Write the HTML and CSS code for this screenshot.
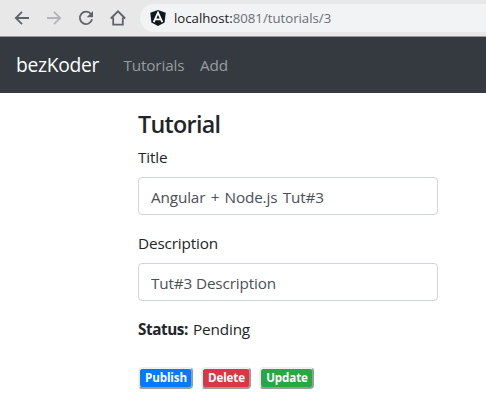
FILE: index.html
```html
<!DOCTYPE html>
<html lang="en">
<head>
<meta charset="utf-8">
<title>Tutorial</title>
<link rel="stylesheet" href="styles.css">
</head>
<body>
<header class="toolbar">
  <svg class="icon" viewBox="0 0 16 16"><path d="M15 8H2M8 1.8 1.8 8 8 14.2"/></svg>
  <svg class="icon muted" viewBox="0 0 16 16"><path d="M1 8h13M8 1.8 14.2 8 8 14.2"/></svg>
  <svg class="icon" viewBox="0 0 16 16"><path d="M13.1 4.2A6.2 6.2 0 1 0 14.1 9.3"/><path class="solid" d="M15 1v6.3H8.7z"/></svg>
  <svg class="icon" viewBox="0 0 16 16"><path d="M.8 8.5 8 1.3l7.2 7.2M3.2 7.5v7.2h9.6V7.5"/></svg>
  <div class="address">
    <svg class="logo" viewBox="0 0 16 16"><path fill="#101720" d="M8 0l7.7 2.7-1.1 9.8L8 16l-6.6-3.5L.3 2.7z"/><path fill="none" stroke="#fff" stroke-width="1.8" d="M3.7 12.2 8 2.7l4.3 9.5M5.5 9.3h5"/></svg>
    <span class="url">localhost:<span class="path">8081/tutorials/3</span></span>
  </div>
</header>
<nav class="navbar">
  <a class="brand">bezKoder</a>
  <a class="link tutorials">Tutorials</a>
  <a class="link add">Add</a>
</nav>
<main class="form">
  <h4>Tutorial</h4>
  <label class="title-label" for="title">Title</label>
  <input id="title" class="title-input" type="text" value="Angular + Node.js Tut#3">
  <label class="desc-label" for="description">Description</label>
  <input id="description" class="desc-input" type="text" value="Tut#3 Description">
  <p class="status"><strong>Status:</strong><span>Pending</span></p>
  <div class="actions">
    <button class="publish">Publish</button>
    <button class="delete">Delete</button>
    <button class="update">Update</button>
  </div>
</main>
</body>
</html>
```
FILE: styles.css
```css
* { box-sizing: border-box; }
body {
  margin: 0;
  background: #fff;
  color: #212529;
  font: 15.3px/24px "Open Sans", "Noto Sans", sans-serif;
  letter-spacing: -0.15px;
  overflow: hidden;
}
.toolbar {
  height: 37px;
  display: flex;
  align-items: flex-start;
  gap: 16px;
  padding: 4px 0 0 14px;
  background: #e8e8e8;
  border-bottom: 1px solid #999a98;
}
.icon {
  width: 16px;
  height: 16px;
  margin-top: 6px;
  flex: none;
  fill: none;
  stroke: #5f6368;
  stroke-width: 1.8;
}
.icon .solid { fill: #5f6368; stroke: none; }
.muted { stroke: #b4b5b7; }
.address {
  flex: 1;
  height: 28px;
  margin-left: -2px;
  padding-left: 10px;
  display: flex;
  align-items: center;
  gap: 8px;
  background: #f1f3f4;
  border-radius: 14px 0 0 14px;
}
.logo { width: 16px; height: 16px; }
.url { font-size: 13.2px; letter-spacing: 0; color: #202124; }
.path { color: #6b6f73; }
.navbar {
  height: 56px;
  display: flex;
  align-items: center;
  padding: 0 16px;
  background: #343a40;
}
.brand { width: 107.5px; font-size: 19.3px; letter-spacing: -0.3px; color: #fff; }
.link { color: #999c9f; }
.tutorials { width: 76.5px; }
.form { width: 300px; margin-left: 138px; padding-top: 16px; }
h4 { margin: 0 0 5px; font-size: 23.3px; line-height: 31px; font-weight: 600; letter-spacing: -0.7px; }
label { display: block; margin-bottom: 8px; }
input {
  display: block;
  width: 300px;
  height: 38px;
  margin: 0 0 16px;
  padding: 1px 12px 0;
  border: 1px solid #ced4da;
  border-radius: 4px;
  color: #495057;
  background: #fff;
  font: inherit;
  letter-spacing: -0.15px;
}
.title-input { word-spacing: 1.5px; }
.status { margin: 0; display: flex; }
strong { width: 55px; font-weight: 700; letter-spacing: -0.45px; }
.actions { display: flex; gap: 8px; margin-top: 26px; }
button {
  height: 22px;
  padding: 0 0 0 1px;
  border: 2px outset #efefef;
  border-radius: 4px;
  color: #fff;
  font: 700 11.6px/18px "Open Sans", "Noto Sans", sans-serif;
  letter-spacing: -0.1px;
}
.publish { width: 55px; background: #007bff; }
.delete { width: 50px; background: #dc3545; }
.update { width: 55px; background: #28a745; }
```
